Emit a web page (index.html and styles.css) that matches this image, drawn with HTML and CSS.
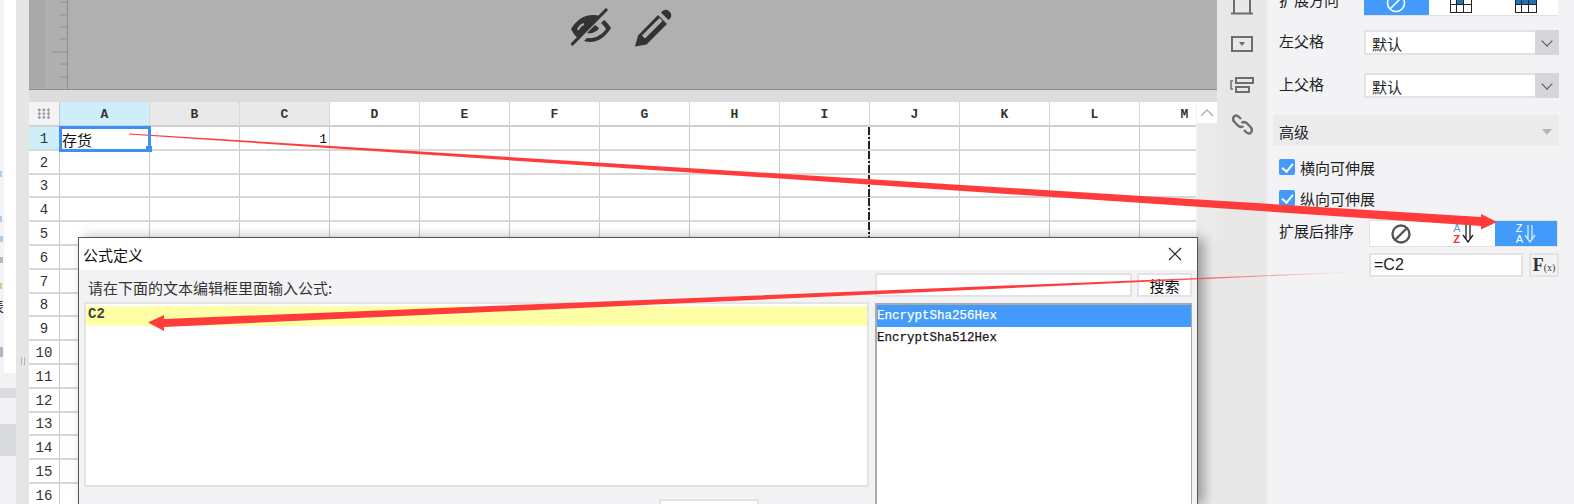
FILE: index.html
```html
<!DOCTYPE html>
<html lang="zh-CN">
    <head>
        <meta charset="UTF-8" />
        <title>公式定义</title>
        <link rel="stylesheet" href="styles.css">
    </head>
    <body>
        <div class="left-strip">
            <span class="mark mark-a"></span>
            <span class="mark mark-b"></span>
            <span class="mark mark-c"></span>
            <span class="mark mark-d"></span>
            <span class="mark mark-e"></span>
            <span class="mark mark-f"></span>
            <span class="frag">表</span>
            <div class="tree-pane"></div>
            <div class="tree-list">
                <div class="band-dark"></div>
                <div class="band-light"></div>
                <div class="band-active"></div>
            </div>
        </div>
        <div class="splitter"><span class="grip"></span></div>

        <div class="main">
            <div class="canvas">
                <div class="canvas-side"></div>
                <div class="ruler">
                    <svg width="23" height="89" viewBox="0 0 23 89">
                        <path d="M15 2h7M15 15h7M15 27h7M15 39h7M7 52h15M15 64h7M15 77h7" stroke="#8e8e8e" fill="none" />
                    </svg>
                </div>
                <div class="canvas-body">
                    <svg class="canvas-icon" width="40" height="40" viewBox="0 0 40 40">
                        <path d="M0 21C6 11 14 7 22 7c3 0 5 .5 7 1L7 30c-3-2-5-5-7-9z" fill="#333" />
                        <path d="M7 22c1-3 3-5 6-6" stroke="#b0b0b0" stroke-width="2" fill="none" />
                        <path d="M33 12c3 2 5 5 7 8-5 8-12 14-21 14-2 0-4-.4-6-1l3-3c8 1 15-3 19-9-1-2-3-4-5-6z" fill="#333" />
                        <path d="M24 17l-8 8c4 1 10-1 12-5z" fill="#333" />
                        <path d="M.5 37L36 1" stroke="#333" stroke-width="3" />
                    </svg>
                    <svg class="canvas-icon" width="40" height="40" viewBox="0 0 40 40">
                        <path d="M1 38.500l3-11L24 7l9 9L12.500 36.500z" fill="#333" />
                        <path d="M8 27.500L25.500 10l3 3L11 30.500z" fill="#b0b0b0" />
                        <path d="M27 4.500c3-3.500 6-3.500 8.500-1s2.500 6-1 8.500z" fill="#333" />
                    </svg>
                </div>
            </div>
            <div class="canvas-gap"></div>
            <div class="sheet-wrap">
                <div class="sheet" id="sheet">
                    <div class="corner"><span class="dots"></span></div>
                    <div class="col-head selected">A</div>
                    <div class="col-head used">B</div>
                    <div class="col-head used">C</div>
                    <div class="col-head">D</div>
                    <div class="col-head">E</div>
                    <div class="col-head">F</div>
                    <div class="col-head">G</div>
                    <div class="col-head">H</div>
                    <div class="col-head">I</div>
                    <div class="col-head">J</div>
                    <div class="col-head">K</div>
                    <div class="col-head">L</div>
                    <div class="col-head">M</div>
                </div>
                <div class="scrollbar">
                    <div class="scroll-up">
                        <svg width="14" height="8" viewBox="0 0 14 8"><path d="M1 7l6-6 6 6" stroke="#b5b5b5" stroke-width="1.500" fill="none" /></svg>
                    </div>
                </div>
            </div>
        </div>

        <div class="icon-bar">
            <svg width="24" height="16" viewBox="0 0 24 16"><path d="M4 0v13M20 0v13M1 13.500h22" stroke="#6d6d6d" stroke-width="2" fill="none" /></svg>
            <svg class="bar-form" width="22" height="17" viewBox="0 0 22 17"><rect x="1" y="1" width="20" height="14" stroke="#6d6d6d" stroke-width="2" fill="none" /><path d="M8 6h6l-3 4z" fill="#6d6d6d" /></svg>
            <svg class="bar-stack" width="24" height="16" viewBox="0 0 24 16"><path d="M3 4H1v8h2" stroke="#6d6d6d" stroke-width="1.500" fill="none" /><rect x="6" y="1" width="17" height="5" stroke="#6d6d6d" stroke-width="2" fill="none" /><rect x="6" y="10" width="13" height="5" stroke="#6d6d6d" stroke-width="2" fill="none" /></svg>
            <svg class="bar-link" width="21" height="21" viewBox="0 0 21 21"><path d="M9 5L7 3C5 1 3 1 2 2.500S.5 6 2.500 8l4 4c2 1.500 3.500 1.500 5 0M12 16l2 2c2 2 4 2 5 .5s1.500-3.500-.5-5.500l-4-4c-2-1.500-3.500-1.500-5 0" stroke="#6d6d6d" stroke-width="2.400" fill="none" /></svg>
        </div>

        <div class="panel">
            <div class="prop-row first-row">
                <span class="prop-label">扩展方向</span>
                <div class="seg seg-top">
                    <div class="seg-item on">
                        <svg width="20" height="20" viewBox="0 0 20 20"><circle cx="10" cy="10" r="8.500" stroke="#fff" stroke-width="1.600" fill="none" /><path d="M4 16L16 4" stroke="#fff" stroke-width="1.600" /></svg>
                    </div>
                    <div class="seg-item grid-cell grid-mid"></div>
                    <div class="seg-item grid-cell grid-top"></div>
                </div>
            </div>
            <div class="prop-row">
                <span class="prop-label">左父格</span>
                <div class="select"><span class="select-text">默认</span><span class="select-btn"></span></div>
            </div>
            <div class="prop-row">
                <span class="prop-label">上父格</span>
                <div class="select"><span class="select-text">默认</span><span class="select-btn"></span></div>
            </div>
            <div class="section-head"><span>高级</span><span class="tri"></span></div>
            <label class="check-row"><span class="check"></span>横向可伸展</label>
            <label class="check-row"><span class="check"></span>纵向可伸展</label>
            <div class="sort-row">
                <span class="prop-label">扩展后排序</span>
                <div class="seg seg-sort">
                    <div class="seg-item">
                        <svg width="22" height="22" viewBox="0 0 22 22"><circle cx="11" cy="11" r="8.500" stroke="#555" stroke-width="2.400" fill="none" /><path d="M5 17L17 5" stroke="#555" stroke-width="2.400" /></svg>
                    </div>
                    <div class="seg-item sort-icon">
                        <span class="az"><i class="az-blue">A</i><i class="az-red">Z</i></span>
                        <svg width="12" height="18" viewBox="0 0 12 18"><path d="M4 0v14M8 0v14M1 10l5 7 5-7" stroke="#222" stroke-width="1.300" fill="none" /></svg>
                    </div>
                    <div class="seg-item on sort-icon">
                        <span class="az"><i>Z</i><i>A</i></span>
                        <svg width="12" height="18" viewBox="0 0 12 18"><path d="M4 0v14M8 0v14M1 10l5 7 5-7" stroke="#d8ebff" stroke-width="1.300" fill="none" /></svg>
                    </div>
                </div>
            </div>
            <div class="formula-row">
                <div class="formula-input">=C2</div>
                <div class="fx">F<small>(x)</small></div>
            </div>
        </div>

        <div class="dialog">
            <div class="dialog-title">
                <span>公式定义</span>
                <svg width="14" height="14" viewBox="0 0 14 14"><path d="M1 1l12 12M13 1L1 13" stroke="#222" stroke-width="1.100" /></svg>
            </div>
            <div class="dialog-body">
                <div class="editor-col">
                    <div class="editor-label">请在下面的文本编辑框里面输入公式:</div>
                    <div class="editor"><div class="editor-line">C2</div></div>
                    <div class="dialog-actions"><div class="action-btn"></div></div>
                </div>
                <div class="func-col">
                    <div class="search-row">
                        <div class="search-input"></div>
                        <div class="search-btn">搜索</div>
                    </div>
                    <div class="func-list">
                        <div class="func-item active">EncryptSha256Hex</div>
                        <div class="func-item">EncryptSha512Hex</div>
                    </div>
                </div>
            </div>
        </div>

        <svg class="arrows" width="1574" height="504" viewBox="0 0 1574 504">
            <defs>
                <linearGradient id="fade" gradientUnits="userSpaceOnUse" x1="1360" y1="0" x2="1150" y2="0">
                    <stop offset="0" stop-color="#ff3b3b" stop-opacity="0" />
                    <stop offset="1" stop-color="#ff3b3b" />
                </linearGradient>
            </defs>
            <path d="M129 133.500L1481 217l0-3 16 8-16 7.500 0-3.500L129 134.500z" fill="#ff3b3b" />
            <path d="M1360 271.500L164 319l0-4-16 7.500 16 8.500 0-4L1360 272z" fill="url(#fade)" />
        </svg>

        <script src="script.js"></script>
    </body>
</html>
```

FILE: styles.css
```css
* {
    box-sizing: border-box;
}
html,
body {
    margin: 0;
    height: 504px;
    overflow: hidden;
}
body {
    position: relative;
    display: flex;
    font-family: "Noto Sans CJK SC", "Liberation Sans", sans-serif;
    font-size: 15px;
    color: #222;
    background-color: #f3f3f6;
}

/* left tree */
.left-strip {
    position: relative;
    width: 16px;
    display: flex;
    flex-direction: column;
    overflow: hidden;
    background-color: #f3f3f6;
}
.tree-pane {
    flex: none;
    height: 373px;
    margin-left: 4px;
    background-color: #fff;
}
.frag {
    position: absolute;
    left: -11px;
    top: 296px;
    font-size: 15px;
    line-height: 20px;
    color: #333;
}
.mark {
    position: absolute;
    left: 0;
    width: 2px;
    height: 6px;
    opacity: 0.7;
    background-color: #8cbde8;
}
.mark-a {
    top: 171px;
}
.mark-b {
    top: 216px;
}
.mark-c {
    top: 236px;
    width: 3px;
}
.mark-d {
    top: 257px;
    width: 3px;
    background-color: #a89a8c;
}
.mark-e {
    top: 283px;
    background-color: #c9b36a;
}
.mark-f {
    top: 347px;
    height: 10px;
    width: 3px;
    background-color: #9a96b8;
}
.tree-list {
    flex: 1;
    display: flex;
    flex-direction: column;
}
.band-dark {
    flex: none;
    height: 10px;
    margin-top: 15px;
    background-color: #dcdcde;
}
.band-light {
    flex: none;
    height: 26px;
}
.band-active {
    flex: none;
    height: 32px;
    background-color: #d9dadd;
}
.splitter {
    width: 13px;
    display: flex;
    justify-content: center;
    align-items: flex-start;
    padding-top: 357px;
    background-color: #e6e6e6;
}
.grip {
    width: 4px;
    height: 8px;
    border-left: 1px solid #b5b5b5;
    border-right: 1px solid #b5b5b5;
}

/* report area */
.main {
    width: 1188px;
    display: flex;
    flex-direction: column;
    overflow: hidden;
}
.canvas {
    flex: none;
    height: 90px;
    display: flex;
    background-color: #b0b0b0;
    border-bottom: 1px solid #8f8f8f;
}
.canvas-side {
    width: 16px;
    background-color: #a9a9a9;
}
.ruler {
    width: 23px;
    background-color: #afafaf;
    border-right: 1px solid #8f8f8f;
}
.canvas-body {
    flex: 1;
    display: flex;
    justify-content: center;
    gap: 23px;
    padding: 8px 40px 0 0;
}
.canvas-gap {
    flex: none;
    height: 12px;
    background-color: #dcdcde;
}
.sheet-wrap {
    flex: 1;
    min-height: 0;
    display: flex;
    background-color: #fff;
}
.sheet {
    width: 1167px;
    display: grid;
    grid-template-columns: 31px repeat(13, 90px);
    grid-template-rows: 25px repeat(17, 23.8px);
    align-content: start;
    overflow: hidden;
}
.corner {
    display: flex;
    align-items: center;
    justify-content: center;
    background-color: #f3f3f6;
    border-right: 1px solid #c8c8c8;
    border-bottom: 2px solid #d0d0d0;
}
.dots {
    width: 14px;
    height: 11px;
    background-image: radial-gradient(circle, #9b9b9b 1.4px, transparent 1.5px);
    background-size: 4.6px 3.8px;
}
.col-head,
.row-head {
    display: flex;
    align-items: center;
    justify-content: center;
    padding-top: 2px;
    font-family: "Liberation Mono", monospace;
    font-weight: bold;
    font-size: 13px;
    color: #333;
}
.col-head {
    background-color: #fff;
    border-right: 1px solid #d6d6d6;
    border-bottom: 2px solid #d0d0d0;
}
.col-head.used {
    background-color: #e9e9e9;
}
.col-head.selected {
    background-color: #cfeefb;
}
.row-head {
    background-color: #fff;
    border-right: 1px solid #c8c8c8;
    border-bottom: 2px solid #d8d8d8;
    font-weight: normal;
    font-size: 14px;
}
.row-head.selected {
    background-color: #cfeefb;
}
.cell {
    position: relative;
    border-right: 1px solid #c8c8c8;
    border-bottom: 2px solid #d8d8d8;
    font-size: 15px;
    line-height: 25px;
    padding: 0 2px;
    color: #111;
    white-space: nowrap;
}
.cell.num {
    text-align: right;
    font-family: "Liberation Mono", monospace;
    font-size: 13px;
}
.cell.page-break::after {
    content: "";
    position: absolute;
    right: -1px;
    top: 0;
    bottom: -2px;
    width: 2px;
    background-image: repeating-linear-gradient(#222 0 8px, transparent 8px 10px, #222 10px 12px, transparent 12px 14px);
}
.cell.current {
    outline: 3px solid #3f8ff0;
    outline-offset: -2px;
    z-index: 1;
}
.cell.current::after {
    content: "";
    position: absolute;
    right: -3px;
    bottom: -3px;
    width: 6px;
    height: 6px;
    background-color: #3f8ff0;
}
.scrollbar {
    width: 21px;
    background-color: #ebebeb;
    border-left: 1px solid #f3f3f3;
}
.scroll-up {
    height: 21px;
    display: flex;
    align-items: center;
    justify-content: center;
    background-color: #fff;
}

/* icon bar */
.icon-bar {
    width: 50px;
    display: flex;
    flex-direction: column;
    align-items: center;
    background-color: #e8e8e8;
}
.bar-form {
    margin-top: 20px;
}
.bar-stack {
    margin-top: 24px;
}
.bar-link {
    margin-top: 21px;
}

/* right panel */
.panel {
    flex: 1;
    padding: 0 15px 0 6px;
    background-color: #f3f3f6;
}
.prop-row {
    display: flex;
    align-items: center;
    height: 25px;
    margin-bottom: 18px;
    padding-left: 6px;
}
.first-row {
    height: 16px;
    margin-bottom: 14px;
    align-items: flex-end;
}
.prop-label {
    width: 85px;
    flex: none;
    line-height: 20px;
    margin-bottom: 4px;
}
.first-row .prop-label {
    margin-bottom: 6px;
}
.seg {
    display: flex;
    background-color: #fff;
}
.seg-top {
    width: 194px;
    height: 16px;
    border-bottom: 1px solid #e0e0e0;
    overflow: hidden;
}
.seg-item {
    flex: 1;
    display: flex;
    align-items: center;
    justify-content: center;
}
.seg-item.on {
    background-color: #429bfb;
    color: #fff;
}
.seg-top .seg-item {
    align-items: flex-end;
}
.seg-top svg {
    margin-bottom: 2px;
}
.grid-cell::before {
    content: "";
    width: 20px;
    height: 14px;
    margin-bottom: 2px;
    border: 1px solid #222;
    background-color: #fff;
    background-repeat: no-repeat;
}
.grid-mid::before {
    background-image: linear-gradient(#222, #222), linear-gradient(#222, #222), linear-gradient(#222, #222), linear-gradient(#2272b0, #2272b0);
    background-size: 1px 100%, 1px 100%, 100% 1px, 6px 6px;
    background-position: 5px 0, 12px 0, 0 6px, 6px 0;
}
.grid-top::before {
    background-image: linear-gradient(#222, #222), linear-gradient(#222, #222), linear-gradient(#222, #222), linear-gradient(#2272b0, #2272b0);
    background-size: 1px 100%, 1px 100%, 100% 1px, 100% 6px;
    background-position: 5px 0, 12px 0, 0 6px, 0 0;
}
.select {
    width: 195px;
    height: 25px;
    display: flex;
    border: 2px solid #e3e3e6;
    background-color: #fff;
}
.select-text {
    flex: 1;
    padding-left: 6px;
    line-height: 24px;
}
.select-btn {
    position: relative;
    width: 24px;
    margin: -2px -2px -2px 0;
    background-color: #d5d6da;
}
.select-btn::after {
    content: "";
    position: absolute;
    left: 8px;
    top: 7px;
    width: 7px;
    height: 7px;
    border-right: 1.500px solid #555;
    border-bottom: 1.500px solid #555;
    transform: rotate(45deg);
}
.section-head {
    display: flex;
    align-items: center;
    justify-content: space-between;
    height: 30px;
    margin-top: -1px;
    padding: 3px 5px 0 6px;
    background-color: #ebebeb;
}
.tri {
    width: 0;
    height: 0;
    border-left: 5px solid transparent;
    border-right: 5px solid transparent;
    border-top: 6px solid #b5b5b5;
    margin-right: 2px;
}
.check-row {
    display: flex;
    align-items: center;
    gap: 5px;
    height: 20px;
    margin-top: 12px;
    padding-left: 6px;
}
.check-row + .check-row {
    margin-top: 11px;
}
.check {
    position: relative;
    width: 16px;
    height: 16px;
    border-radius: 2px;
    background-color: #429bfb;
}
.check::after {
    content: "";
    position: absolute;
    left: 5px;
    top: 2px;
    width: 5px;
    height: 9px;
    border-right: 2px solid #fff;
    border-bottom: 2px solid #fff;
    transform: rotate(40deg);
}
.sort-row {
    display: flex;
    align-items: center;
    height: 27px;
    margin-top: 12px;
    padding-left: 6px;
}
.sort-row .prop-label {
    width: 90px;
    margin-bottom: 6px;
}
.seg-sort {
    width: 189px;
    height: 27px;
    border: 1px solid #e3e3e6;
}
.sort-icon {
    gap: 1px;
}
.az {
    display: flex;
    flex-direction: column;
    font-family: "Liberation Sans", sans-serif;
    font-size: 11px;
    line-height: 11px;
}
.az i {
    font-style: normal;
}
.az-blue {
    color: #5b9bd5;
}
.az-red {
    color: #f03030;
    font-weight: bold;
}
.formula-row {
    display: flex;
    gap: 6px;
    height: 24px;
    margin-top: 6px;
    margin-left: 96px;
}
.formula-input {
    width: 154px;
    padding-left: 3px;
    border: 2px solid #e3e3e6;
    background-color: #fff;
    font-family: "Liberation Sans", sans-serif;
    font-size: 16px;
    line-height: 20px;
}
.fx {
    width: 30px;
    text-align: center;
    border: 2px solid #e3e3e6;
    font-family: "Liberation Serif", serif;
    font-weight: bold;
    font-size: 18px;
    line-height: 20px;
    color: #333;
    white-space: nowrap;
}
.fx small {
    font-size: 10px;
    font-weight: normal;
}

/* dialog */
.dialog {
    position: absolute;
    left: 78px;
    top: 237px;
    width: 1120px;
    height: 267px;
    display: flex;
    flex-direction: column;
    overflow: hidden;
    border: 1px solid #555;
    border-bottom: none;
    background-color: #f3f3f6;
    box-shadow: 6px 1px 12px rgba(0, 0, 0, 0.35);
}
.dialog-title {
    flex: none;
    height: 32px;
    display: flex;
    align-items: center;
    justify-content: space-between;
    padding: 0 15px 0 4px;
    background-color: #fff;
    color: #111;
}
.dialog-body {
    flex: 1;
    min-height: 0;
    display: flex;
    padding-left: 5px;
}
.editor-col {
    width: 785px;
}
.editor-label {
    height: 32px;
    padding: 6px 0 0 4px;
    line-height: 24px;
    color: #333;
}
.editor {
    height: 185px;
    padding-top: 2px;
    border: 2px solid #e3e3e6;
    background-color: #fff;
}
.editor-line {
    height: 20px;
    padding-left: 2px;
    background-color: #ffffa8;
    font-family: "Liberation Mono", monospace;
    font-weight: bold;
    font-size: 14px;
    line-height: 17px;
    color: #444;
}
.dialog-actions {
    display: flex;
    padding: 12px 0 0 575px;
}
.action-btn {
    width: 100px;
    height: 24px;
    flex: none;
    border: 2px solid #e3e3e6;
    background-color: #fff;
}
.func-col {
    width: 317px;
    margin-left: 6px;
    padding-top: 3px;
    display: flex;
    flex-direction: column;
}
.search-row {
    flex: none;
    display: flex;
    gap: 5px;
    height: 24px;
}
.search-input {
    width: 257px;
    border: 2px solid #e3e3e6;
    background-color: #fff;
}
.search-btn {
    width: 55px;
    text-align: center;
    border: 2px solid #e3e3e6;
    background-color: #fff;
    line-height: 22px;
    color: #111;
}
.func-list {
    flex: 1;
    margin-top: 6px;
    border: 1px solid #aaa;
    border-width: 2px 1px 0 2px;
    background-color: #fff;
}
.func-item {
    height: 22px;
    font-family: "Liberation Mono", monospace;
    font-size: 12.500px;
    -webkit-text-stroke: 0.25px;
    line-height: 22px;
    color: #1c1420;
}
.func-item.active {
    background-color: #429bfb;
    color: #fff;
}
.arrows {
    position: absolute;
    left: 0;
    top: 0;
    pointer-events: none;
}
```

FILE: script.js
```js
// fill the sheet rows, only the first row has values
const sheet = document.getElementById("sheet")

for (let r = 1; r <= 17; r++) {
    const head = document.createElement("div")
    head.className = r === 1 ? "row-head selected" : "row-head"
    head.textContent = r
    sheet.appendChild(head)

    for (let c = 0; c < 13; c++) {
        const cell = document.createElement("div")
        cell.className = "cell"
        if (c === 8) cell.classList.add("page-break")
        if (r === 1 && c === 0) {
            cell.classList.add("current")
            cell.textContent = "存货"
        }
        if (r === 1 && c === 2) {
            cell.classList.add("num")
            cell.textContent = "1"
        }
        sheet.appendChild(cell)
    }
}
```
